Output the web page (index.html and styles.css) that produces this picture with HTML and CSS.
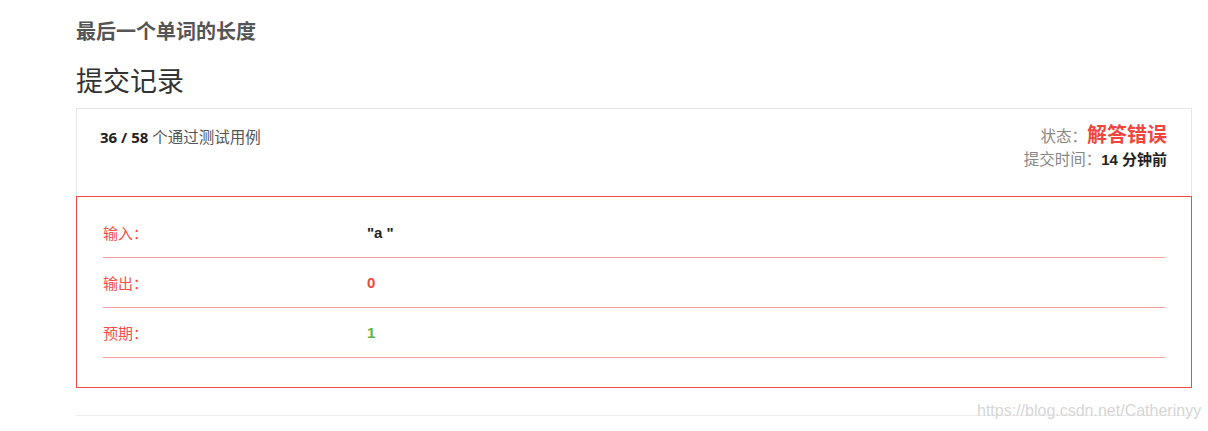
FILE: index.html
```html
<!DOCTYPE html>
<html lang="zh-CN">
<head>
<meta charset="utf-8">
<title>提交记录</title>
<link rel="stylesheet" href="styles.css">
</head>
<body>
<div class="page">
  <h3 class="problem">最后一个单词的长度</h3>
  <h1 class="title">提交记录</h1>
  <div class="panel-head">
    <div class="passed"><b>36 / 58</b> 个通过测试用例</div>
    <div class="meta">
      <div class="status">状态：<span class="wrong">解答错误</span></div>
      <div class="time">提交时间：<b>14 分钟前</b></div>
    </div>
  </div>
  <div class="result">
    <div class="row"><span class="label">输入：</span><span class="value">"a "</span></div>
    <div class="row"><span class="label">输出：</span><span class="value out">0</span></div>
    <div class="row"><span class="label">预期：</span><span class="value exp">1</span></div>
  </div>
  <div class="rule"></div>
</div>
<div class="watermark">https://blog.csdn.net/Catherinyy</div>
</body>
</html>
```
FILE: styles.css
```css
* { box-sizing: border-box; }
html, body { margin: 0; padding: 0; background: #fff; }
body {
  font-family: "Open Sans", "Noto Sans CJK SC", sans-serif;
  color: #333;
  width: 1208px;
  height: 431px;
  overflow: hidden;
  position: relative;
}
.page {
  padding: 0 16px 0 76px;
}
.problem {
  margin: 0;
  padding-top: 17px;
  height: 48px;
  font-size: 20px;
  line-height: 28px;
  font-weight: 700;
  color: #555;
  font-family: "Noto Sans CJK SC", sans-serif;
}
.title {
  margin: 0;
  height: 60px;
  font-size: 27px;
  line-height: 36px;
  padding-top: 14px;
  font-weight: 400;
  color: #333;
  font-family: "Noto Sans CJK SC", sans-serif;
}
.panel-head {
  height: 88px;
  border: 1px solid #e5e5e5;
  border-bottom: none;
  display: flex;
  justify-content: space-between;
  padding: 17px 24px 0 23px;
}
.passed {
  font-size: 15.5px;
  line-height: 22px;
  color: #555;
}
.passed b { color: #222; font-weight: 700; font-size: 15px; }
.meta {
  text-align: right;
  color: #888;
  font-size: 15.5px;
}
.status { line-height: 24px; margin-top: -4px; }
.wrong {
  color: #f0463e;
  font-size: 20px;
  font-weight: 700;
  font-family: "Noto Sans CJK SC", sans-serif;
}
.time { line-height: 22px; }
.time b { color: #222; font-weight: 700; font-size: 15px; font-family: "Liberation Sans", "Noto Sans CJK SC", sans-serif; }
.result {
  border: 1px solid #ef4a43;
  height: 192px;
  padding: 11px 26px 0 26px;
}
.row {
  height: 50px;
  border-bottom: 1px solid #f8a0a0;
  display: flex;
  align-items: center;
  font-size: 15px;
  padding-bottom: 1px;
}
.label {
  width: 264px;
  color: #f2514a;
  font-family: "Noto Sans CJK SC", sans-serif;
}
.value {
  font-weight: 700;
  color: #222;
  font-family: "Liberation Sans", sans-serif;
}
.value.out { color: #f2463f; }
.value.exp { color: #5cb83c; }
.rule {
  margin-top: 27px;
  border-top: 1px solid #eeeeee;
  width: 1116px;
}
.watermark {
  position: absolute;
  left: 977px;
  top: 401px;
  font-family: "Liberation Sans", sans-serif;
  font-size: 16px;
  color: #d6d6d6;
  line-height: 20px;
}
```
